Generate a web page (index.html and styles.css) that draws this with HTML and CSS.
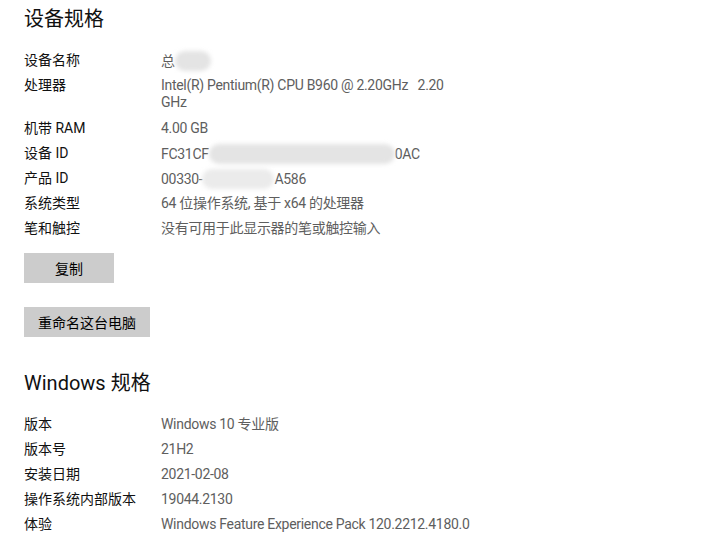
FILE: index.html
```html
<!DOCTYPE html>
<html lang="zh-CN">
<head>
  <meta charset="UTF-8" />
  <title>关于</title>
  <link rel="stylesheet" href="styles.css">
</head>
<body>

  <!-- 设备规格 -->
  <section class="specs">
    <h2>设备规格</h2>
    <div class="row"><span class="label">设备名称</span><span class="value">总<span class="blur blur-name"></span></span></div>
    <div class="row row-wrap"><span class="label">处理器</span><span class="value">Intel(R) Pentium(R) CPU B960 @ 2.20GHz&nbsp;&nbsp; 2.20 GHz</span></div>
    <div class="row"><span class="label">机带 RAM</span><span class="value">4.00 GB</span></div>
    <div class="row"><span class="label">设备 ID</span><span class="value">FC31CF<span class="blur blur-id"></span>0AC</span></div>
    <div class="row"><span class="label">产品 ID</span><span class="value">00330-<span class="blur blur-product"></span>A586</span></div>
    <div class="row"><span class="label">系统类型</span><span class="value">64 位操作系统, 基于 x64 的处理器</span></div>
    <div class="row"><span class="label">笔和触控</span><span class="value">没有可用于此显示器的笔或触控输入</span></div>

    <div class="actions">
      <button class="btn btn-copy">复制</button>
      <button class="btn">重命名这台电脑</button>
    </div>
  </section>

  <!-- Windows 规格 -->
  <section class="specs">
    <h2>Windows 规格</h2>
    <div class="row"><span class="label">版本</span><span class="value">Windows 10 专业版</span></div>
    <div class="row"><span class="label">版本号</span><span class="value">21H2</span></div>
    <div class="row"><span class="label">安装日期</span><span class="value">2021-02-08</span></div>
    <div class="row"><span class="label">操作系统内部版本</span><span class="value">19044.2130</span></div>
    <div class="row"><span class="label">体验</span><span class="value">Windows Feature Experience Pack 120.2212.4180.0</span></div>
  </section>

</body>
</html>
```

FILE: styles.css
```css
body {
  margin: 0;
  padding: 5px 24px 0;
  font-family: Roboto, 'Noto Sans CJK SC', sans-serif;
  font-size: 14px;
  background: #fff;
  color: #000;
}

h2 {
  margin: 0 0 14px;
  font-size: 20px;
  font-weight: normal;
  line-height: 28px;
  color: #111;
}

.specs + .specs {
  margin-top: 32px;
}

/* 固定行高，避免中英文混排撑高行 */
.row {
  display: flex;
  align-items: flex-start;
  height: 18px;
  padding: 4px 0 3px;
  line-height: 18px;
}

.row-wrap {
  height: 35px;
  padding-top: 5px;
  line-height: 17px;
}

.label {
  width: 137px;
  flex-shrink: 0;
  color: #111;
}

.value {
  width: 300px;
  color: #5e5e5e;
  letter-spacing: -0.3px;
}

.row:last-child .value {
  width: auto;
}

/* 打码区域 */
.blur {
  display: inline-block;
  height: 20px;
  vertical-align: -5px;
  background: #e4e4e4;
  border-radius: 10px;
  filter: blur(2px);
}

.blur-name {
  width: 36px;
}

.blur-id {
  width: 186px;
}

.blur-product {
  width: 72px;
  background: #ebebeb;
}

.actions {
  display: flex;
  flex-direction: column;
  align-items: flex-start;
  gap: 24px;
  margin-top: 13px;
}

.btn {
  height: 30px;
  padding: 0 14px;
  border: none;
  background: #cccccc;
  color: #000;
  font-family: 'Noto Sans CJK SC', sans-serif;
  font-size: 14px;
  cursor: pointer;
}

.btn-copy {
  width: 90px;
}
```
